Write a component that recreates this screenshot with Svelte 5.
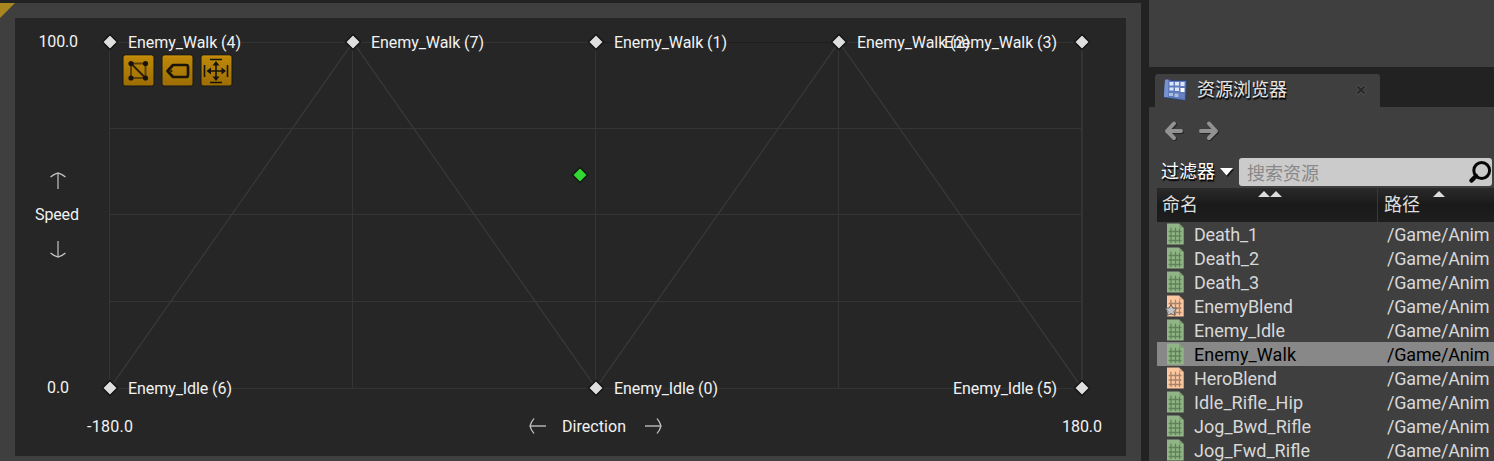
<script>
  const points = [
    { x: 110, y: 42, name: 'Enemy_Walk (4)', tx: 128, w: 113 },
    { x: 353, y: 42, name: 'Enemy_Walk (7)', tx: 371, w: 113 },
    { x: 596, y: 42, name: 'Enemy_Walk (1)', tx: 614, w: 113 },
    { x: 839, y: 42, name: 'Enemy_Walk (2)', tx: 857, w: 113 },
    { x: 1082, y: 42, name: 'Enemy_Walk (3)', tx: 944, w: 113 },
    { x: 110, y: 388, name: 'Enemy_Idle (6)', tx: 128, w: 104 },
    { x: 596, y: 388, name: 'Enemy_Idle (0)', tx: 614, w: 104 },
    { x: 1082, y: 388, name: 'Enemy_Idle (5)', tx: 953, w: 104 }
  ];
  const assets = [
    { name: 'Death_1', w: 64 },
    { name: 'Death_2', w: 65 },
    { name: 'Death_3', w: 65 },
    { name: 'EnemyBlend', w: 99, blend: true, star: true },
    { name: 'Enemy_Idle', w: 91 },
    { name: 'Enemy_Walk', w: 102, selected: true },
    { name: 'HeroBlend', w: 83, blend: true },
    { name: 'Idle_Rifle_Hip', w: 109 },
    { name: 'Jog_Bwd_Rifle', w: 117 },
    { name: 'Jog_Fwd_Rifle', w: 116 }
  ];
</script>

<div class="editor">
  <section class="blend">
    <svg class="canvas" width="1141" height="458" viewBox="0 3 1141 458">
      <path d="M0 3H15L0 18Z" fill="#a88721" />
      <rect x="15" y="18" width="1111" height="438" fill="#262626" />
      <g stroke="#353535" fill="none">
        <path d="M109.5 42V388M352.5 42V388M595.5 42V388M838.5 42V388M109 128.5H1082M109 214.5H1082M109 301.5H1082" />
        <path d="M109 42.5H1082M109 388.5H1082" stroke="#323232" />
        <path d="M1082 42V388" stroke-width="2" stroke="#333" />
        <path d="M110 388L353 42L596 388L839 42L1082 388" stroke="#373737" stroke-width="1.4" />
        <path d="M596 42.5H839" stroke="#1d1d1d" />
      </g>
      {#each points as p}
        <path d="M{p.x} {p.y - 7.5}l7.5 7.5l-7.5 7.5l-7.5 -7.5Z" fill="#dedede" stroke="#141414" stroke-width="1.5" />
        <text x={p.tx} y={p.y + 6} textLength={p.w}>{p.name}</text>
      {/each}
      <path d="M580 167.5l7.5 7.5l-7.5 7.5l-7.5 -7.5Z" fill="#31d831" stroke="#101910" stroke-width="1.5" />
      <text x="38.5" y="47" textLength="39.5">100.0</text>
      <text x="47" y="393" textLength="22">0.0</text>
      <text x="87" y="432" textLength="46">-180.0</text>
      <text x="1062" y="432" textLength="40">180.0</text>
      <text x="35" y="220" textLength="44">Speed</text>
      <text x="562" y="432" textLength="64">Direction</text>
      <g fill="none">
        <path d="M58 173V189M58 241V257M530 426H546M645 426H661" stroke-width="1.8" stroke="#8f8f8f" />
        <path d="M50.5 177L54 174.6L58 173L62 174.6L65.5 177M50.5 253L54 255.4L58 257L62 255.4L65.5 253M534 418.5L531.6 422L530 426L531.6 430L534 433.5M657 418.5L659.4 422L661 426L659.4 430L657 433.5" stroke-width="1.3" stroke="#c4c4c4" />
      </g>
      <defs>
        <linearGradient id="gold" x2="0" y2="1">
          <stop offset="0" stop-color="#c08a09" /><stop offset="1" stop-color="#9c6d04" />
        </linearGradient>
      </defs>
      {#each [123, 162, 201] as x}
        <rect x={x} y="55" width="31" height="31" rx="2" fill="url(#gold)" stroke="#171612" />
        <path d="M{x + 2} 56H{x + 29}" stroke="#d59b13" opacity=".6" />
      {/each}
      <rect x="131" y="63.5" width="14.5" height="14.5" fill="none" stroke="#5c4209" stroke-width="2" />
      <path d="M131 63.5L145.5 78" stroke="#29200b" stroke-width="1.8" />
      {#each [[131, 63.5], [145.5, 63.5], [131, 78], [145.5, 78]] as c}
        <circle cx={c[0]} cy={c[1]} r="2.6" fill="#17140d" />
      {/each}
      <path d="M173 65H186Q188 65 188 67V75Q188 77 186 77H173L167.5 71Z" fill="none" stroke="#19150c" stroke-width="2.7" stroke-linejoin="round" />
      <circle cx="171.3" cy="71" r="1.2" fill="#302308" />
      <path d="M210 59.5H222M210 82.5H222M204.5 65V77M227.5 65V77M208 71H225M216 62V80" stroke="#17140d" stroke-width="1.6" />
      <path d="M216 61L219.5 65.5H212.5ZM216 81L219.5 76.5H212.5ZM206.5 71L211 67.5V74.5ZM226 71L221.5 67.5V74.5Z" fill="#17140d" />
    </svg>
  </section>

  <aside>
    <div class="upper"></div>
    <div class="tabs">
      <div class="tab">
        <svg class="logo" width="26" height="24" viewBox="0 0 26 24">
          <path d="M3 2L5 1L10 2L24 2L23 23L1 20Z" fill="#34436d" />
          <path d="M2 2L4 1L8 3H23L22 22L1 19Z" fill="#5f7dbc" />
          <path d="M2 2L5 2L5 19L1 19Z" fill="#7794d0" />
          <path d="M6.5 4h4v3.5h-4zM12 4h4v3.500h-4zM17.500 4h4v4h-4zM6.500 9.500h4v3h-4zM12 9.500h4v3.500h-4z" fill="#dce5f7" />
          <path d="M17.500 10h4v4h-4z" fill="#fff" />
          <path d="M6 15h4v3h-4zM11.5 15.500h4v3.500h-4z" fill="#aabce4" /><path d="M17 16h4v3.500h-4z" fill="#6984c3" />
        </svg>
        <span class="title">资源浏览器</span>
        <svg class="close" width="10" height="10" viewBox="0 0 10 10"><path d="M1 1L9 9M9 1L1 9" stroke="#595959" stroke-width="3.6" /><path d="M1.300 1.300L8.700 8.700M8.700 1.300L1.300 8.700" stroke="#2b2b2b" stroke-width="2.5" /></svg>
      </div>
    </div>
    <div class="browser">
      <div class="nav">
        {#each [false, true] as forward}
          <svg width="20" height="22" viewBox="0 0 20 22">
            <g fill="none" stroke-width="4" stroke-linecap="round" stroke-linejoin="round">
              <path d={forward ? 'M3 12H17M11 4.5L18 12L11 19' : 'M18 12H5M11 4.5L4 12L11 19'} stroke="#252525" />
              <path d={forward ? 'M2 11H16M10 3.5L17 11L10 18' : 'M17 11H4M10 3.5L3 11L10 18'} stroke="#929292" />
            </g>
          </svg>
        {/each}
      </div>
      <div class="filter">
        <span class="title">过滤器</span>
        <svg class="caret" width="14" height="11" viewBox="0 0 14 11"><path d="M1 2.5H14L7.5 10Z" fill="#111" /><path d="M0 1H13L6.5 8.5Z" fill="#fff" /></svg>
        <div class="search"><span>搜索资源</span>
          <svg width="24" height="26" viewBox="0 0 24 26"><circle cx="13.7" cy="11.5" r="7.9" fill="none" stroke="#050505" stroke-width="3" /><path d="M8 17L3.5 21.5" stroke="#050505" stroke-width="4.5" stroke-linecap="round" /></svg>
        </div>
      </div>
      <div class="table">
        <div class="head">
          <div><span>命名</span><svg width="24" height="6" viewBox="0 0 24 6"><path d="M0 6L6 0L12 6L18 0L24 6Z" fill="#ddd" /></svg></div>
          <div><span>路径</span><svg width="12" height="6" viewBox="0 0 12 6"><path d="M0 6L6 0L12 6Z" fill="#ddd" /></svg></div>
        </div>
        {#each assets as a}
          <div class="row" class:selected={a.selected}>
            <svg class="icon" width="20" height="24" viewBox="0 0 20 24">
              <path d="M2 1.500H14L18.700 6V22.500H2Z" fill={a.blend ? '#fbc8a0' : '#91b587'} />
              <path d="M14 1.500V6H18.700Z" fill={a.blend ? '#e3ad86' : '#7da574'} />
              <path d="M3.700 9.500H16.500M3.700 14H16.500M3.700 18.500H16.500M6 5.700V21M10.500 5.700V21M14.500 6.500V21" fill="none" stroke={a.blend ? '#a98369' : '#5f8259'} stroke-width="1.3" />
              {#if a.star}<path d="M6 10.500L7.700 14L11.700 14.500L9 17.500L10 21.500L6 19.600L2 21.500L3 17.500L.3 14.500L4.300 14Z" fill="#c4c4c4" stroke="#57504b" stroke-width=".8" stroke-linejoin="round" />{/if}
            </svg>
            <svg class="label" width="193" height="24"><text x="0" y="19" textLength={a.w}>{a.name}</text></svg>
            <svg class="label" width="107" height="24"><text x="0" y="19" textLength="102.500">/Game/Anim</text></svg>
          </div>
        {/each}
      </div>
    </div>
  </aside>
</div>

<style>
  :global(body) { margin: 0; overflow: hidden; background: #222; }
  .editor { width: 1494px; height: 461px; display: grid; grid-template-columns: 1141px 345px; column-gap: 8px; overflow: hidden; background: #222; color: #ddd; font-family: Roboto, "Noto Sans CJK SC", sans-serif; }
  svg { display: block; flex: none; }
  .blend { margin-top: 3px; height: 458px; background: #3f3f3f; }
  .canvas text { fill: #f2f2f2; font-size: 16px; }
  aside { min-width: 0; height: 461px; overflow: hidden; }
  .upper { height: 67px; background: #3f3f3f; }
  .tabs { height: 40px; padding: 7px 0 0 6px; box-sizing: border-box; }
  .tab { display: flex; align-items: center; width: 225px; height: 33px; background: #3f3f3f; border-radius: 3px 3px 0 0; }
  .logo { margin-left: 8px; margin-bottom: 1px; }
  .title { font-size: 18px; line-height: 26px; text-shadow: 1px 2px 1px #000; white-space: nowrap; }
  .tab .title { margin-left: 8px; margin-bottom: 2px; color: #e4e4e4; }
  .close { margin-left: auto; margin-right: 14px; margin-bottom: 1px; }
  .browser { height: 354px; background: #3f3f3f; }
  .nav { display: flex; height: 51px; gap: 15px; padding: 13px 0 0 15px; box-sizing: border-box; }
  .filter { display: flex; align-items: center; height: 28px; padding-left: 12px; color: #fff; }
  .caret { margin-left: 5px; }
  .search { display: flex; align-items: center; justify-content: space-between; margin-left: 5px; width: 253px; height: 28px; border-radius: 3px; background: #cbcbcb; color: #888; font-size: 18px; box-sizing: border-box; padding-left: 8px; }
  .table { margin-left: 8px; }
  .head { display: grid; grid-template-columns: 220px 117px; height: 34px; margin-top: 2px; background: linear-gradient(#2a2a2a, #1a1a1a 50%, #1e1e1e); font-size: 18px; line-height: 34px; }
  .head div { display: grid; grid-template-columns: 1fr; box-sizing: border-box; padding-left: 5px; }
  .head div + div { border-left: 1px solid #383838; padding-left: 6px; }
  .head span, .head svg { grid-area: 1 / 1; }
  .head svg { justify-self: center; margin-top: 3px; }
  .row { display: flex; height: 24px; color: #d8d8d8; }
  .selected { background: #888; color: #000; }
  .icon { margin-left: 8px; margin-right: 9px; }
  .label text { fill: currentColor; font-size: 18px; }
</style>
